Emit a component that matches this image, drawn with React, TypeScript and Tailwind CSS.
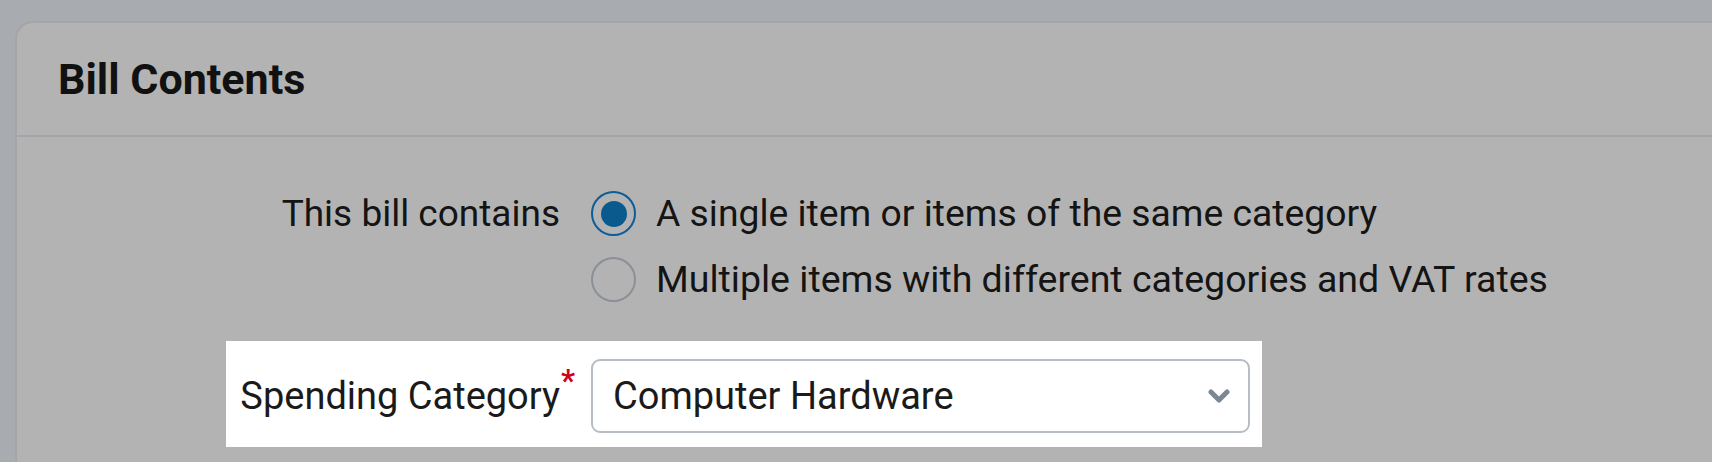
import React from "react";

export default function App() {
  const font = { fontFamily: "Roboto, 'Liberation Sans', sans-serif" };
  return (
    <div
      className="w-[1712px] h-[462px] overflow-hidden bg-[#a8abb0] pl-[15px] pt-[21px]"
      style={font}
    >
      <div className="w-[1720px] h-[460px] rounded-tl-[18px] border-l-2 border-t-2 border-[#a5a5a9] bg-[#b3b3b3] flex flex-col">
        <div className="h-[114px] border-b-2 border-[#a5a5a9] flex items-center pl-[41px]">
          <h2 className="text-[43px] font-bold text-[#111111] leading-none">
            Bill Contents
          </h2>
        </div>
        <div className="flex flex-col pt-[54px]">
          <div className="flex items-start">
            <div className="w-[543px] h-[45px] flex items-center justify-end text-[37px] leading-[45px] text-[#141414]">
              This bill contains
            </div>
            <div className="ml-[31px] flex flex-col gap-[21px]">
              <label className="flex items-center gap-[20px] text-[37.3px] leading-[45px] text-[#141414]">
                <span className="w-[45px] h-[45px] rounded-full border-2 border-[#0b5c99] flex items-center justify-center">
                  <span className="w-[26px] h-[26px] rounded-full bg-[#0a5a8e]" />
                </span>
                A single item or items of the same category
              </label>
              <label className="flex items-center gap-[20px] text-[37.5px] leading-[45px] text-[#141414]">
                <span className="w-[45px] h-[45px] rounded-full border-2 border-[#8b9096]" />
                Multiple items with different categories and VAT rates
              </label>
            </div>
          </div>
          <div className="mt-[39px] ml-[209px] w-[1036px] bg-white flex items-center pl-[13px] pr-[12px] pt-[18px] pb-[14px]">
            <div className="relative w-[321px] text-right text-[38px] leading-[44px] text-[#1a1a1a] whitespace-nowrap">
              Spending Category
              <span className="absolute left-[322px] top-[-9px] text-[#d0021b] text-[31px] font-bold leading-none">
                *
              </span>
            </div>
            <div className="ml-[31px] w-[659px] h-[74px] rounded-[9px] border-2 border-[#b6bdc4] bg-white flex items-center justify-between pl-[20px] pr-[18px]">
              <span className="text-[38px] leading-[44px] text-[#1a1a1a]">
                Computer Hardware
              </span>
              <svg width="22" height="14" viewBox="0 0 22 14" fill="none">
                <path
                  d="M3 3 L11 11 L19 3"
                  stroke="#7b8792"
                  strokeWidth="5"
                  strokeLinecap="round"
                  strokeLinejoin="round"
                />
              </svg>
            </div>
          </div>
        </div>
      </div>
    </div>
  );
}
